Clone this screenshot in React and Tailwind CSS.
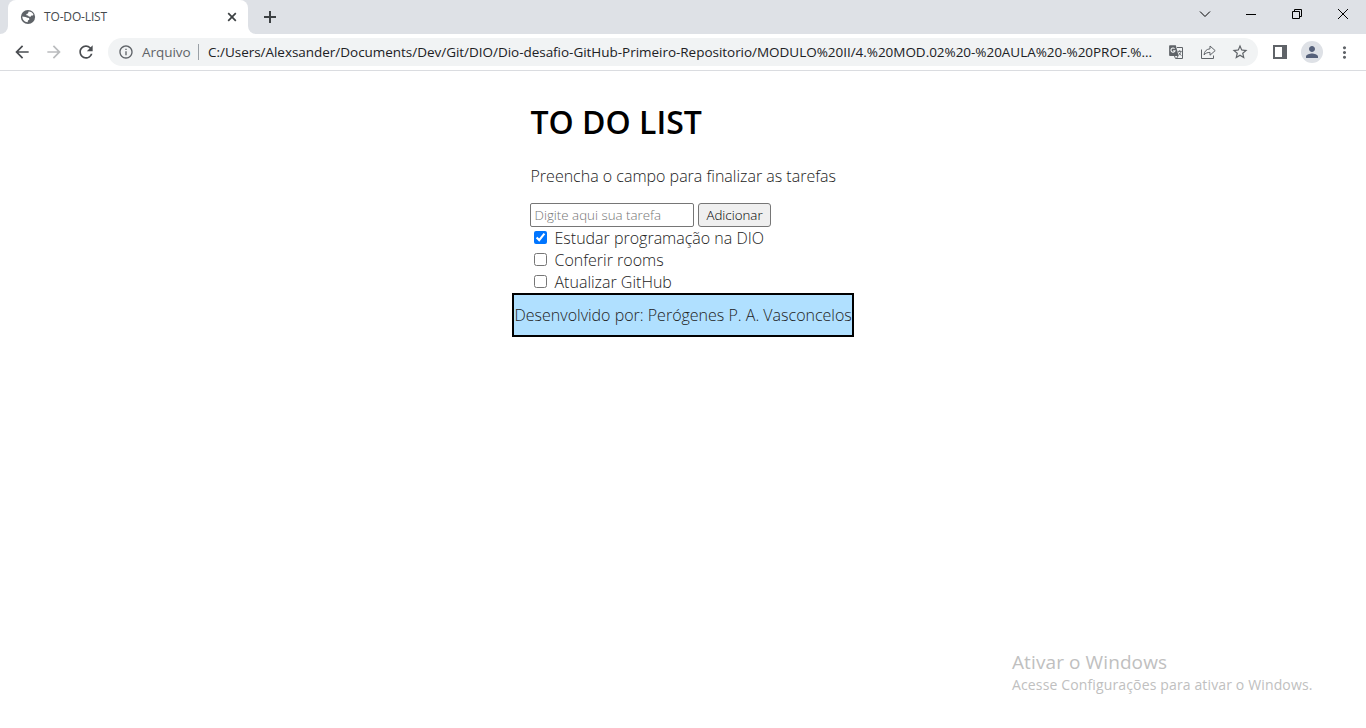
import {
  MdArrowBack, MdArrowForward, MdRefresh, MdInfoOutline,
  MdStarBorder, MdPerson, MdMoreVert,
} from 'react-icons/md';

function GlobeIcon() {
  return (
    <svg className="shrink-0" width="16" height="16" viewBox="0 0 16 16">
      <circle cx="8" cy="8" r="7.1" fill="#5f6368" />
      <path d="M8.6 2.4 C10.8 2.4 12.6 3.6 13.4 5.4 L13 6.6 H11.4 L10.6 7.8 L8.8 7.6 L8 6.4 L6.4 6.2 V4.9 L8 4.4 Z" fill="#fff" />
      <path d="M2.3 7.6 L5.4 8 L7.4 8.8 L9 9 L9.4 10.4 L8 11.4 L7.6 13.2 C4.8 13.2 2.3 11 2.3 7.6 Z" fill="#fff" />
    </svg>
  );
}

function TranslateIcon() {
  return (
    <svg className="shrink-0" width="16" height="16" viewBox="0 0 16 16" fill="none" stroke="currentColor">
      <path d="M9 3.5 H14.5 V14.5 H7.5 L6.5 12" />
      <path d="M8.5 14.5 L10 12" />
      <path d="M2 1.2 H7.8 L10.6 12 H2 Q1.1 12 1.1 11 V2.1 Q1.1 1.2 2 1.2 Z" fill="currentColor" stroke="none" />
      <path d="M6.6 4.7 A2.1 2.1 0 1 0 7.1 6.7 H5.1" stroke="#f1f3f4" strokeWidth="1.1" />
      <path d="M9.8 7.4 H13.7 M11.7 6.2 V7.4 M13 7.4 C12.6 9.2 11.6 10.4 10.3 11.3 M10.6 8.6 L13.3 11.6" strokeWidth="0.9" />
    </svg>
  );
}

function TabStrip() {
  return (
    <div className="flex h-[34px] bg-[#dee1e6]">
      <div className="w-2 bg-white">
        <div className="h-full rounded-br-lg bg-[#dee1e6]" />
      </div>
      <div className="flex w-60 items-center rounded-t-lg bg-white pl-3 pr-[9px]">
        <GlobeIcon />
        <span className="ml-2 flex-1 whitespace-nowrap text-[12px] leading-4 tracking-[-0.15px] text-[#45494d]">TO-DO-LIST</span>
        <svg width="14" height="14" viewBox="0 0 14 14" stroke="#3c4043" strokeWidth="1.7">
          <path d="M3.2 3.2 L10.8 10.8 M10.8 3.2 L3.2 10.8" />
        </svg>
      </div>
      <div className="w-2 bg-white">
        <div className="h-full rounded-bl-lg bg-[#dee1e6]" />
      </div>
      <div className="flex w-7 items-center justify-center">
        <svg width="12" height="12" viewBox="0 0 12 12" stroke="#3c4043" strokeWidth="2">
          <path d="M0 6 H12 M6 0 V12" />
        </svg>
      </div>
      <div className="ml-auto flex h-7 items-center text-black">
        {['M1 3.5 L6 8.5 L11 3.5', 'M1 6.5 H11', 'M1.5 3.5 H8.5 V10.5 H1.5 Z M3.5 3 V1.5 H10.5 V8.5 H9', 'M1 1 L11 11 M11 1 L1 11'].map((d) => (
          <div key={d} className="flex w-[46px] justify-center">
            <svg width="12" height="12" viewBox="0 0 12 12" fill="none" stroke="currentColor"><path d={d} /></svg>
          </div>
        ))}
      </div>
    </div>
  );
}

function Toolbar() {
  return (
    <div className="flex h-[37px] items-center border-b border-[#dadce0] bg-white pl-3 text-[#5f6368]">
      <MdArrowBack className="h-5 w-5 text-[#4a4d51]" />
      <MdArrowForward className="ml-3 h-5 w-5 text-[#babcbe]" />
      <MdRefresh className="ml-3 h-5 w-5 text-[#4a4d51]" />
      <div className="ml-3 flex h-7 w-[1150px] items-center rounded-full bg-[#f1f3f4] pl-[10px]">
        <MdInfoOutline className="h-4 w-4 shrink-0" />
        <span className="ml-2 w-[48px] whitespace-nowrap text-[13.5px] leading-5 tracking-[-0.04px]">Arquivo</span>
        <span className="ml-2 h-4 w-px bg-[#9aa0a6]" />
        <span className="ml-[9px] w-[960px] whitespace-nowrap text-[13.5px] leading-5 tracking-[-0.03px] text-[#202124]">C:/Users/Alexsander/Documents/Dev/Git/DIO/Dio-desafio-GitHub-Primeiro-Repositorio/MODULO%20II/4.%20MOD.02%20-%20AULA%20-%20PROF.%...</span>
        <TranslateIcon />
        <svg className="ml-4 shrink-0" width="16" height="16" viewBox="0 0 16 16" fill="none" stroke="currentColor">
          <path d="M1.5 5.5 V14.5 H13.5 V11.5" />
          <path d="M4 10.9 C4.4 7.2 6.5 5.1 10 4.8 V2 L15.2 6.6 L10 11.2 V8.4 C7.4 8.4 5.4 9.2 4 10.9 Z" strokeLinejoin="round" />
        </svg>
        <MdStarBorder className="ml-[15px] h-[18px] w-[18px] shrink-0" />
      </div>
      <svg className="ml-[15px]" width="14" height="14" viewBox="0 0 14 14" fill="currentColor">
        <path fillRule="evenodd" d="M0 0 H14 V14 H0 Z M2 2 V12 H9 V2 Z" />
      </svg>
      <div className="ml-[14px] flex h-[22px] w-[22px] items-center justify-center rounded-full bg-[#dee1e6]">
        <MdPerson className="h-[18px] w-[18px] text-[#56617a]" />
      </div>
      <MdMoreVert className="ml-3 h-[19px] w-[19px]" />
    </div>
  );
}

function Task({ label, checked }) {
  return (
    <label className="flex h-[22px] items-center pl-1">
      <input type="checkbox" defaultChecked={checked} className="mb-0.5 h-[13px] w-[13px]" />
      <span className="ml-[7.5px] whitespace-nowrap">{label}</span>
    </label>
  );
}

export default function App() {
  return (
    <div className="flex h-[728px] flex-col overflow-hidden bg-white font-['Open_Sans',sans-serif]">
      <TabStrip />
      <Toolbar />
      <main className="flex flex-col pl-[530px] text-base font-light leading-[22px] text-[#222]">
        <h1 className="mt-[29px] whitespace-nowrap pl-[0.5px] text-[32px] font-semibold leading-[44px] text-black">TO DO LIST</h1>
        <p className="mt-[21px] whitespace-nowrap pl-[0.5px]">Preencha o campo para finalizar as tarefas</p>
        <div className="mt-4 flex h-6 gap-1">
          <input
            type="text"
            placeholder="Digite aqui sua tarefa"
            className="w-[164px] rounded-[2px] border border-[#767676] px-[3.5px] text-[13.333px] leading-[18px] placeholder:text-[#757575]"
          />
          <button className="w-[73px] rounded-[3px] border border-[#767676] bg-[#efefef] text-[13.333px] leading-[18px] text-black">Adicionar</button>
        </div>
        <Task label="Estudar programação na DIO" checked />
        <Task label="Conferir rooms" />
        <Task label="Atualizar GitHub" />
        <footer className="-ml-[18px] flex h-11 w-[342px] items-center whitespace-nowrap border-2 border-black bg-[#b0e0ff] pl-[0.5px]">
          Desenvolvido por: Perógenes P. A. Vasconcelos
        </footer>
      </main>
      <aside className="mt-auto pb-[33px] pl-[1012px] text-[#c0c0c0]">
        <p className="whitespace-nowrap text-[19px] leading-[26px] tracking-[0.1px]">Ativar o Windows</p>
        <p className="whitespace-nowrap text-[14px] leading-[20px] tracking-[0.14px]">Acesse Configurações para ativar o Windows.</p>
      </aside>
    </div>
  );
}
